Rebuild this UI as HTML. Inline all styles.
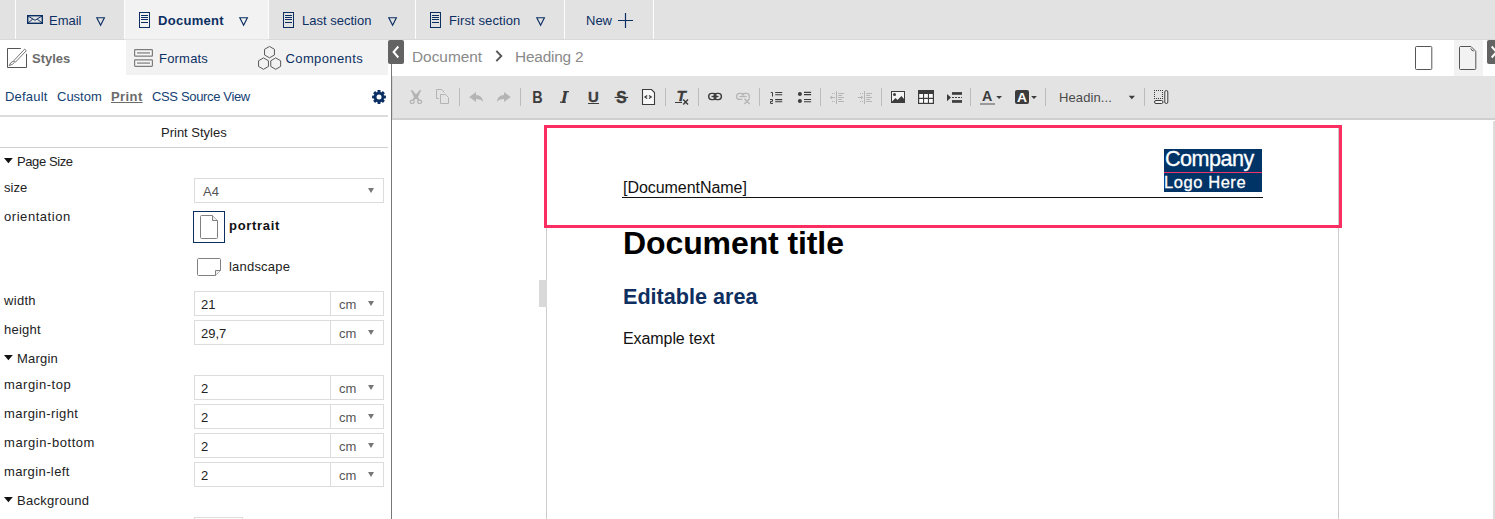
<!DOCTYPE html>
<html lang="en">
<head>
<meta charset="utf-8">
<title>Document editor</title>
<style>
html,body{margin:0;padding:0;}
body{width:1495px;height:519px;overflow:hidden;position:relative;background:#fff;
 font-family:"Liberation Sans",sans-serif;font-size:13px;color:#333;}
*{box-sizing:border-box;}
.abs{position:absolute;}
.t{position:absolute;white-space:nowrap;line-height:18px;font-size:13px;}
.navy{color:#0b2f63;}
svg{position:absolute;overflow:visible;}
/* top tab bar */
#tabbar{left:0;top:0;width:1495px;height:40px;background:#e2e2e2;border-bottom:1px solid #d8d8d8;}
.sep{position:absolute;top:0;width:1px;height:39px;background:#fdfdfd;}
#tabactive{left:125px;top:0;width:143px;height:40px;background:#f2f2f2;border-bottom:1px solid #e4e4e4;}
/* left panel */
#subtabs{left:126px;top:40px;width:262px;height:35px;background:#f2f2f2;}
.hl{position:absolute;left:0;width:388px;}
.lbl{position:absolute;left:4px;white-space:nowrap;font-size:13px;line-height:18px;color:#222;}
.inp{position:absolute;left:194px;width:190px;height:25px;border:1px solid #dcdcdc;background:#fff;}
.inp .v{position:absolute;left:6px;top:5px;font-size:13px;line-height:16px;color:#222;}
.inp .d{position:absolute;left:135px;top:0;width:1px;height:23px;background:#dcdcdc;}
.inp .u{position:absolute;left:144px;top:5px;font-size:13px;line-height:16px;color:#555;}
.inp .a{position:absolute;left:173px;top:9px;width:0;height:0;border-left:3.5px solid transparent;border-right:3.5px solid transparent;border-top:5px solid #777;}
/* editor */
#crumb{left:392px;top:40px;width:1103px;height:36px;background:#fff;}
#toolbar{left:392px;top:76px;width:1103px;height:44px;background:#e3e3e3;border-bottom:2px solid #cfcfcf;border-left:1px solid #d4d4d4;}
.tsep{position:absolute;top:88px;width:1px;height:18px;background:#bdbdbd;}
</style>
</head>
<body>

<!-- ===== top tab bar ===== -->
<div id="tabbar" class="abs"></div>
<div id="tabactive" class="abs"></div>
<div class="sep" style="left:15px"></div>
<div class="sep" style="left:124px"></div>
<div class="sep" style="left:268px"></div>
<div class="sep" style="left:415px"></div>
<div class="sep" style="left:564px"></div>
<div class="sep" style="left:653px"></div>

<!-- email icon -->
<svg style="left:27px;top:15px" width="16" height="9" viewBox="0 0 16 9"><rect x="0.7" y="0.7" width="14.6" height="7.6" fill="none" stroke="#0b2f63" stroke-width="1.4"/><path d="M1 1 L8 5.3 L15 1 M1 8 L5.8 4 M15 8 L10.2 4" fill="none" stroke="#0b2f63" stroke-width="1"/></svg>
<span class="t navy" style="left:49px;top:12px">Email</span>
<svg class="tri" style="left:96px;top:17px" width="10" height="9" viewBox="0 0 10 9"><path d="M0.8 0.7 H8.4 L4.6 8.2 Z" fill="none" stroke="#0b2f63" stroke-width="1.15"/></svg>

<!-- document tab -->
<svg style="left:139px;top:12px" width="11" height="16" viewBox="0 0 11 16"><rect x="0.5" y="0.5" width="10" height="15" fill="none" stroke="#0b2f63" stroke-width="1"/><path d="M2 3.5H9M2 5.5H9M2 7.5H9M2 10.5H9" stroke="#0b2f63" stroke-width="1"/></svg>
<span class="t navy" style="left:158px;top:12px;font-weight:700;letter-spacing:0.3px">Document</span>
<svg class="tri" style="left:239px;top:17px" width="10" height="9" viewBox="0 0 10 9"><path d="M0.8 0.7 H8.4 L4.6 8.2 Z" fill="none" stroke="#0b2f63" stroke-width="1.15"/></svg>

<!-- last section -->
<svg style="left:283px;top:12px" width="11" height="16" viewBox="0 0 11 16"><rect x="0.5" y="0.5" width="10" height="15" fill="none" stroke="#0b2f63" stroke-width="1"/><path d="M2 3.5H9M2 5.5H9M2 7.5H9M2 10.5H9" stroke="#0b2f63" stroke-width="1"/></svg>
<span class="t navy" style="left:302px;top:12px">Last section</span>
<svg class="tri" style="left:388px;top:17px" width="10" height="9" viewBox="0 0 10 9"><path d="M0.8 0.7 H8.4 L4.6 8.2 Z" fill="none" stroke="#0b2f63" stroke-width="1.15"/></svg>

<!-- first section -->
<svg style="left:430px;top:12px" width="11" height="16" viewBox="0 0 11 16"><rect x="0.5" y="0.5" width="10" height="15" fill="none" stroke="#0b2f63" stroke-width="1"/><path d="M2 3.5H9M2 5.5H9M2 7.5H9M2 10.5H9" stroke="#0b2f63" stroke-width="1"/></svg>
<span class="t navy" style="left:449px;top:12px;letter-spacing:0.1px">First section</span>
<svg class="tri" style="left:536px;top:17px" width="10" height="9" viewBox="0 0 10 9"><path d="M0.8 0.7 H8.4 L4.6 8.2 Z" fill="none" stroke="#0b2f63" stroke-width="1.15"/></svg>

<!-- new -->
<span class="t navy" style="left:586px;top:12px">New</span>
<svg style="left:618px;top:13px" width="15" height="15" viewBox="0 0 15 15"><path d="M7.5 0V15M0 7.5H15" stroke="#0b2f63" stroke-width="1.2"/></svg>

<!-- ===== left panel ===== -->
<div id="subtabs" class="abs"></div>
<!-- styles icon -->
<svg style="left:7px;top:48px" width="20" height="20" viewBox="0 0 20 20"><path d="M13.8 0.5H0.5V19.5H19.5V5.8" fill="none" stroke="#555" stroke-width="1"/><path d="M17.7 1.1 L19.3 2.7 L8.5 14.1 L6.9 12.5 Z" fill="#fff" stroke="#666" stroke-width="0.9"/><path d="M6.3 13.1 Q3.4 14 2.2 17.7 Q5.9 16.6 7.5 14.3 Z" fill="#fff" stroke="#666" stroke-width="0.9"/></svg>
<span class="t" style="left:32px;top:50px;font-weight:700;color:#6b6b6b">Styles</span>
<!-- formats icon -->
<svg style="left:134px;top:49px" width="20" height="18" viewBox="0 0 20 18"><g fill="#f6f6f6" stroke="#7c7c7c" stroke-width="1.2"><rect x="0.6" y="0.6" width="17.8" height="6.6" rx="0.8"/><rect x="0.6" y="10.8" width="17.8" height="6.6" rx="0.8"/></g><g fill="#999"><rect x="3" y="3.1" width="13" height="1.6"/><rect x="3" y="13.3" width="13" height="1.6"/></g></svg>
<span class="t navy" style="left:159px;top:50px;letter-spacing:0.2px">Formats</span>
<!-- components icon -->
<svg style="left:258px;top:46px" width="24" height="24" viewBox="0 0 24 24"><g fill="none" stroke="#5a5a5a" stroke-width="1"><path d="M11.50 0.45 L16.44 3.30 L16.44 9.00 L11.50 11.85 L6.56 9.00 L6.56 3.30 Z"/><path d="M5.50 11.90 L10.44 14.75 L10.44 20.45 L5.50 23.30 L0.56 20.45 L0.56 14.75 Z"/><path d="M17.70 11.90 L22.64 14.75 L22.64 20.45 L17.70 23.30 L12.76 20.45 L12.76 14.75 Z"/></g></svg>
<span class="t navy" style="left:285.5px;top:50px;letter-spacing:0.38px">Components</span>

<span class="t" style="left:5px;top:88px;color:#143f73;letter-spacing:0.2px">Default</span>
<span class="t" style="left:57px;top:88px;color:#143f73">Custom</span>
<span class="t" style="left:111px;top:88px;color:#6b6b6b;font-weight:700;letter-spacing:0.4px;text-decoration:underline">Print</span>
<span class="t" style="left:152px;top:88px;color:#143f73;letter-spacing:-0.35px">CSS Source View</span>
<!-- gear -->
<svg style="left:372px;top:90px" width="14" height="14" viewBox="0 0 14 14"><g fill="#0b2f63"><circle cx="7" cy="7" r="5.2"/><g id="teeth"><rect x="5.5" y="0.1" width="3" height="13.8" rx="0.4"/><rect x="5.5" y="0.1" width="3" height="13.8" rx="0.4" transform="rotate(45 7 7)"/><rect x="5.5" y="0.1" width="3" height="13.8" rx="0.4" transform="rotate(90 7 7)"/><rect x="5.5" y="0.1" width="3" height="13.8" rx="0.4" transform="rotate(135 7 7)"/></g></g><circle cx="7" cy="7" r="2.5" fill="#fff"/></svg>

<div class="hl" style="top:115px;height:2px;background:#dcdcdc"></div>
<span class="t" style="left:161px;top:124px;color:#222">Print Styles</span>
<div class="hl" style="top:147px;height:1px;background:#d0d0d0"></div>

<!-- page size -->
<svg style="left:4px;top:158px" width="10" height="6" viewBox="0 0 10 6"><path d="M0 0H8.8L4.4 5.2Z" fill="#111"/></svg>
<span class="lbl" style="left:17px;top:153px;letter-spacing:-0.4px">Page Size</span>
<span class="lbl" style="top:179px">size</span>
<div class="inp" style="top:178px"><span class="v" style="left:8px;top:5px;color:#555">A4</span><i class="a"></i></div>
<span class="lbl" style="top:208px;letter-spacing:0.55px">orientation</span>
<div class="abs" style="left:193px;top:211px;width:32px;height:32px;border:1px solid #0b2f63"></div>
<svg style="left:200px;top:215px" width="18" height="24" viewBox="0 0 18 24"><path d="M1.5 0.5H12.5L17.5 5.5V22.5Q17.5 23.5 16.5 23.5H1.5Q0.5 23.5 0.5 22.5V1.5Q0.5 0.5 1.5 0.5Z" fill="#fff" stroke="#808080" stroke-width="1"/><path d="M12.5 0.5V5.5H17.5" fill="#eee" stroke="#808080" stroke-width="1"/></svg>
<span class="t" style="left:229px;top:217px;font-weight:700;color:#111;letter-spacing:0.7px">portrait</span>
<svg style="left:197px;top:258px" width="24" height="18" viewBox="0 0 24 18"><path d="M1.5 0.5H22.5Q23.5 0.5 23.5 1.5V12.5L18.5 17.5H1.5Q0.5 17.5 0.5 16.5V1.5Q0.5 0.5 1.5 0.5Z" fill="#fff" stroke="#808080" stroke-width="1"/><path d="M23.5 12.5H18.5V17.5" fill="#eee" stroke="#808080" stroke-width="1"/></svg>
<span class="t" style="left:229px;top:258px;color:#222;letter-spacing:0.2px">landscape</span>

<span class="lbl" style="top:292px;letter-spacing:0.3px">width</span>
<div class="inp" style="top:291px"><span class="v">21</span><i class="d"></i><span class="u">cm</span><i class="a"></i></div>
<span class="lbl" style="top:321px;letter-spacing:0.22px">height</span>
<div class="inp" style="top:320px"><span class="v">29,7</span><i class="d"></i><span class="u">cm</span><i class="a"></i></div>

<svg style="left:4px;top:355px" width="10" height="6" viewBox="0 0 10 6"><path d="M0 0H8.8L4.4 5.2Z" fill="#111"/></svg>
<span class="lbl" style="left:17px;top:350px;letter-spacing:0.2px">Margin</span>
<span class="lbl" style="top:376px;letter-spacing:0.5px">margin-top</span>
<div class="inp" style="top:375px"><span class="v">2</span><i class="d"></i><span class="u">cm</span><i class="a"></i></div>
<span class="lbl" style="top:405px;letter-spacing:0.42px">margin-right</span>
<div class="inp" style="top:404px"><span class="v">2</span><i class="d"></i><span class="u">cm</span><i class="a"></i></div>
<span class="lbl" style="top:434px;letter-spacing:0.55px">margin-bottom</span>
<div class="inp" style="top:433px"><span class="v">2</span><i class="d"></i><span class="u">cm</span><i class="a"></i></div>
<span class="lbl" style="top:463px;letter-spacing:0.4px">margin-left</span>
<div class="inp" style="top:462px"><span class="v">2</span><i class="d"></i><span class="u">cm</span><i class="a"></i></div>
<svg style="left:4px;top:497px" width="10" height="6" viewBox="0 0 10 6"><path d="M0 0H8.8L4.4 5.2Z" fill="#111"/></svg>
<span class="lbl" style="left:17px;top:492px;letter-spacing:0.28px">Background</span>
<div class="abs" style="left:194px;top:517px;width:49px;height:24px;border:1px solid #dcdcdc"></div>

<!-- divider + collapse button -->
<div class="abs" style="left:391px;top:60px;width:1px;height:459px;background:#777"></div>
<div class="abs" style="left:388px;top:40px;width:16px;height:24px;background:#636363;border-radius:2px"></div>
<svg style="left:388px;top:40px" width="16" height="24" viewBox="0 0 16 24"><path d="M10.3 6.5 L5.6 12 L10.3 17.5" fill="none" stroke="#fff" stroke-width="2"/></svg>

<!-- ===== breadcrumb ===== -->
<span class="t" style="left:412px;top:48px;font-size:15.4px;line-height:18px;color:#8a8a8a;letter-spacing:0px">Document</span>
<svg style="left:495px;top:50px" width="8" height="12" viewBox="0 0 8 12"><path d="M1.3 0.9 L6.3 6 L1.3 11.1" fill="none" stroke="#555" stroke-width="1.9"/></svg>
<span class="t" style="left:515px;top:48px;font-size:15.4px;line-height:18px;color:#8a8a8a;letter-spacing:-0.2px">Heading 2</span>

<svg style="left:1415px;top:46px" width="18" height="24" viewBox="0 0 18 24"><rect x="0.5" y="0.5" width="16.3" height="23" rx="1" fill="#fff" stroke="#555" stroke-width="1"/></svg>
<div class="abs" style="left:1454px;top:40px;width:29px;height:36px;background:#f2f2f2"></div>
<svg style="left:1459px;top:46px" width="18" height="24" viewBox="0 0 18 24"><path d="M1.5 0.5H12L16.8 5.3V22.5Q16.8 23.5 15.8 23.5H1.5Q0.5 23.5 0.5 22.5V1.5Q0.5 0.5 1.5 0.5Z" fill="#f2f2f2" stroke="#555" stroke-width="1"/><path d="M11.8 2.4Q12.2 4.8 14.8 5" fill="none" stroke="#555" stroke-width="1"/></svg>
<div class="abs" style="left:1487px;top:40px;width:16px;height:24px;background:#636363;border-radius:2px"></div>
<svg style="left:1487px;top:40px" width="8" height="24" viewBox="0 0 8 24"><path d="M4.7 6.5 L9.5 12 L4.7 17.5" fill="none" stroke="#fff" stroke-width="2"/></svg>

<!-- ===== toolbar ===== -->
<div id="toolbar" class="abs"></div>
<!--TB-->
<!-- toolbar icons: one svg covering toolbar area, coords = page coords -->
<svg id="tbsvg" style="left:0;top:0" width="1495" height="130" viewBox="0 0 1495 130">
<g stroke="#bcbcbc" stroke-width="1" shape-rendering="crispEdges">
<path d="M459.5 88V106M520.5 88V106M665.5 88V106M698.5 88V106M759.5 88V106M820.5 88V106M881.5 88V106M970.5 88V106M1045.5 88V106M1144.5 88V106"/>
</g>
<!-- cut (disabled) -->
<g fill="#b2b2b2" stroke="none">
<path d="M410.7 89.9 L412.4 90.3 L417 95.8 L419.6 99.8 L418.4 100.6 L415.8 98.4 L414.2 97.4 Z"/>
<path d="M421.3 89.9 L419.6 90.3 L415 95.8 L412.4 99.8 L413.6 100.6 L416.2 98.4 L417.8 97.4 Z"/>
</g>
<g fill="none" stroke="#b2b2b2" stroke-width="1.2">
<ellipse cx="412.3" cy="101.8" rx="2" ry="1.7"/>
<ellipse cx="419.7" cy="101.8" rx="2" ry="1.7"/>
</g>
<!-- copy (disabled) -->
<g fill="none" stroke="#b4b4b4" stroke-width="1">
<path d="M438.8 98.5H436.5V89.5H441.7L444.5 92.5"/>
<path d="M440.5 94.5H445.5L448.5 97.5V103.5H440.5Z"/>
</g>
<!-- undo / redo (disabled) -->
<g fill="#b4b4b4">
<path d="M469.3 97 L476 92 V95 C480 95 483 98 483 102 C481.5 99.8 479.5 99 476 99 V102 Z"/>
<path d="M510.7 97 L504 92 V95 C500 95 497 98 497 102 C498.5 99.8 500.5 99 504 99 V102 Z"/>
</g>
<!-- B I U S -->
<g fill="#3c3c3c" font-family="Liberation Sans, sans-serif">
<text x="532.3" y="102.6" font-size="16.5" font-weight="700" textLength="10.4" lengthAdjust="spacingAndGlyphs">B</text>
<text x="561.6" y="102.6" font-size="16.3" font-weight="700" font-style="italic" textLength="5.4" lengthAdjust="spacingAndGlyphs">I</text>
<rect x="563.2" y="91" width="5.7" height="1.3"/><rect x="560" y="101.5" width="5.9" height="1.3"/>
<text x="588" y="102" font-size="15.5" font-weight="700" textLength="10.8" lengthAdjust="spacingAndGlyphs" stroke="#3c3c3c" stroke-width="0.3">U</text>
<rect x="588" y="103" width="11" height="1"/>
<text x="616.2" y="102.8" font-size="16.5" font-weight="700" textLength="10.4" lengthAdjust="spacingAndGlyphs" stroke="#3c3c3c" stroke-width="0.45">S</text>
<rect x="614.6" y="96.9" width="13.6" height="1.1"/>
</g>
<!-- source -->
<path d="M642.5 89.5H651.5L654.5 92.5V104.5H642.5Z" fill="#f8f8f8" stroke="#3c3c3c" stroke-width="1.1"/>
<path d="M647.2 95.5 L645 97 L647.2 98.5 M649 95.5 L651.2 97 L649 98.5" fill="none" stroke="#3c3c3c" stroke-width="1.3"/>
<!-- remove format Tx -->
<g fill="#3c3c3c">
<text x="676.4" y="100.9" font-size="13.8" font-weight="700" font-style="italic" font-family="Liberation Sans, sans-serif" textLength="9.4" lengthAdjust="spacingAndGlyphs" stroke="#3c3c3c" stroke-width="0.3">T</text>
<rect x="675" y="102" width="7" height="1"/>
</g>
<path d="M683.2 99.6 L688 104.6 M688 99.6 L683.2 104.6" stroke="#3c3c3c" stroke-width="1.4" fill="none"/>
<!-- link -->
<g fill="none" stroke="#3c3c3c" stroke-width="1.4">
<rect x="708.7" y="93.4" width="7.4" height="6.2" rx="3"/>
<rect x="714" y="93.4" width="7.4" height="6.2" rx="3"/>
<path d="M711.5 96.5H718.6" stroke-width="1.3"/>
</g>
<!-- unlink disabled -->
<g fill="none" stroke="#b4b4b4" stroke-width="1.2">
<path d="M742.3 99.4H739.6Q736.6 99.4 736.6 96.4Q736.6 93.4 739.6 93.4H741Q743.6 93.4 743.8 95.4"/>
<path d="M742.2 95.4Q742.4 93.4 745 93.4H746.4Q749.4 93.4 749.4 96.4Q749.4 97.6 748.8 98.4"/>
<path d="M739.4 96.5H746.6"/>
<path d="M744.4 98.8 L749.6 104 M749.6 98.8 L744.4 104" stroke-width="1.3"/>
</g>
<!-- numbered list -->
<g fill="none" stroke="#3c3c3c" stroke-width="1">
<path d="M770.8 92.5H772.5V96.6"/>
<path d="M770 99.5H772.5V101.4H770.5V103.4H773"/>
<path d="M775.2 92.5H782.2M775.2 94.7H782.2M775.2 99.6H782.2M775.2 101.8H782.2" stroke-width="1.1"/>
</g>
<!-- bullet list -->
<g fill="#3c3c3c"><circle cx="799.9" cy="93.9" r="2"/><circle cx="799.9" cy="101" r="2"/></g>
<path d="M804 92.4H811.1M804 94.6H811.1M804 99.5H811.1M804 101.7H811.1" stroke="#3c3c3c" stroke-width="1.1" fill="none"/>
<!-- outdent / indent disabled -->
<g fill="none" stroke="#b4b4b4" stroke-width="1">
<path d="M836.5 91V104M838.2 93.5H844M838.2 95.5H842M838.2 97.5H844M838.2 99.5H842M838.2 101.5H844"/>
<path d="M832 93.5H833M834 93.5H835M832 101.5H833M834 101.5H835M830.4 97.5H835M832.2 96 L830.4 97.5 L832.2 99"/>
<path d="M864.5 91V104M866.2 93.5H872M866.2 95.5H870M866.2 97.5H872M866.2 99.5H870M866.2 101.5H872"/>
<path d="M860 93.5H861M862 93.5H863M860 101.5H861M862 101.5H863M858 97.5H862.8M861 96 L862.8 97.5 L861 99"/>
</g>
<!-- image -->
<rect x="891.5" y="91.5" width="13" height="11" fill="#f4f4f4" stroke="#3c3c3c" stroke-width="1"/>
<circle cx="894.5" cy="94.4" r="1.5" fill="#3c3c3c"/>
<path d="M892 102 L892 101.5 L895.5 98 L897.5 100 L901.5 96 L904 99 V102 Z" fill="#3c3c3c"/>
<!-- table -->
<rect x="918" y="90" width="16" height="14" fill="#3c3c3c"/>
<g fill="#fbfbfb"><rect x="919.2" y="94" width="3.8" height="3.8"/><rect x="924.1" y="94" width="3.8" height="3.8"/><rect x="929" y="94" width="3.8" height="3.8"/><rect x="919.2" y="99" width="3.8" height="3.8"/><rect x="924.1" y="99" width="3.8" height="3.8"/><rect x="929" y="99" width="3.8" height="3.8"/></g>
<!-- page break -->
<g fill="#3c3c3c"><path d="M947 94V101.2L951 97.6Z"/><rect x="952" y="92.1" width="10" height="2.7"/><rect x="952" y="100.1" width="10" height="2.7"/></g>
<path d="M952 97.5H962" stroke="#3c3c3c" stroke-width="1" stroke-dasharray="2 1" fill="none"/>
<!-- text color -->
<text x="982" y="100.9" font-size="13.8" font-weight="700" font-family="Liberation Sans, sans-serif" fill="#3c3c3c" textLength="10.3" lengthAdjust="spacingAndGlyphs">A</text>
<rect x="980" y="103" width="15" height="2" fill="#9a9a9a"/>
<path d="M996.2 96H1002L999.1 98.9Z" fill="#3c3c3c"/>
<!-- bg color -->
<rect x="1015" y="90" width="14" height="14" rx="2" fill="#3c3c3c"/>
<text x="1017" y="102" font-size="13.5" font-weight="700" font-family="Liberation Sans, sans-serif" fill="#fff" textLength="10" lengthAdjust="spacingAndGlyphs">A</text>
<path d="M1031.1 96H1036.9L1034 98.9Z" fill="#3c3c3c"/>
<!-- format combo -->
<path d="M1128.7 95.8H1135L1131.85 99.2Z" fill="#3c3c3c"/>
<!-- show blocks -->
<g fill="none" stroke="#3c3c3c" stroke-width="1">
<path d="M1154 90.5H1163M1154 98.5H1163M1154.5 90V99M1162.5 90V99" stroke-dasharray="1 1" shape-rendering="crispEdges"/>
<rect x="1154.5" y="100.5" width="8.5" height="3" rx="1.5" fill="#f0f0f0"/>
<rect x="1164.8" y="90.5" width="3" height="13" rx="1.5" fill="#f0f0f0"/>
</g>
</svg>
<span class="t" style="left:1059px;top:89px;color:#4a4a4a;letter-spacing:0.1px">Headin...</span>
<!--/TB-->

<!-- ===== document ===== -->
<div class="abs" style="left:1493px;top:121px;width:2px;height:398px;background:#dcdcdc"></div>
<div class="abs" style="left:546px;top:126px;width:793px;height:393px;border-left:1px solid #ccc;border-right:1px solid #ccc;background:#fff"></div>
<div class="abs" style="left:539px;top:280px;width:8px;height:27px;background:#d9d9d9"></div>
<div class="abs" style="left:544px;top:125px;width:798px;height:103px;border:3px solid #fb2e62"></div>
<span class="t" style="left:623px;top:179px;font-size:16px;line-height:18px;color:#111;letter-spacing:-0.05px">[DocumentName]</span>
<div class="abs" style="left:622px;top:197px;width:641px;height:1px;background:#111"></div>
<div class="abs" style="left:1164px;top:149px;width:98px;height:43px;background:#003366"></div>
<div class="abs" style="left:1164px;top:172px;width:98px;height:1px;background:#f0346a"></div>
<span class="t" id="company" style="-webkit-text-stroke:0.3px #fff;left:1165px;top:147px;font-size:21.6px;line-height:24px;color:#fff;letter-spacing:-0.5px">Company</span>
<span class="t" id="logohere" style="-webkit-text-stroke:0.3px #fff;left:1164px;top:172px;font-size:16.5px;line-height:20px;color:#fff;letter-spacing:0.57px">Logo Here</span>
<span class="t" style="left:623px;top:225px;font-size:32px;line-height:37px;font-weight:700;color:#000;letter-spacing:-0.1px">Document title</span>
<span class="t" id="editable" style="left:623px;top:284px;font-size:21.6px;line-height:26px;font-weight:700;color:#0e2f5f">Editable area</span>
<span class="t" style="left:623px;top:330px;font-size:16px;line-height:18px;color:#111;letter-spacing:-0.08px">Example text</span>

</body>
</html>
